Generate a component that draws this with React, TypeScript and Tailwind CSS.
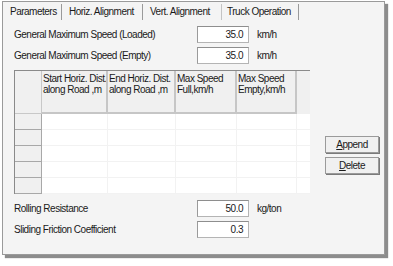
import React from "react";

const font = { fontFamily: '"Liberation Sans", Arial, sans-serif' };

function Field({ label, value, unit, mt }: { label: string; value: string; unit?: string; mt: string }) {
  return (
    <div className={`flex items-center h-[17px] ${mt}`}>
      <div className="w-[194px] pl-[11px] whitespace-nowrap">{label}</div>
      <div className="w-[52px] h-[17px] border border-[#b4b4b4] border-t-[#8e8e8e] border-l-[#9a9a9a] bg-white flex items-center justify-end pr-[5px]">{value}</div>
      {unit ? <div className="ml-[8px]">{unit}</div> : null}
    </div>
  );
}

const cols = [
  { w: "w-[66px]", l1: "Start Horiz. Dist.", l2: "along Road ,m" },
  { w: "w-[68px]", l1: "End Horiz. Dist.", l2: "along Road ,m" },
  { w: "w-[61px]", l1: "Max Speed", l2: "Full,km/h" },
  { w: "w-[60px]", l1: "Max Speed", l2: "Empty,km/h" },
];

export default function App() {
  return (
    <div className="w-[393px] h-[266px] bg-white pl-[2px] pt-[1px] text-[10px] tracking-[-0.5px] leading-[12px] text-[#1a1a1a]" style={font}>
      <div className="w-[383px] h-[254px] border border-[#9a9a9a] bg-[#f4f4f4] shadow-[3px_3px_1px_rgba(0,0,0,0.45)] flex flex-col">
        <div className="flex h-[18px] items-stretch pt-[2px]">
          <div className="w-[59px] pl-[7px] flex items-center border-r border-[#9a9a9a]">Parameters</div>
          <div className="w-[81px] pl-[7px] flex items-center border-r border-[#9a9a9a]">Horiz. Alignment</div>
          <div className="w-[79px] pl-[7px] flex items-center border-r border-[#c4c4c4]">Vert. Alignment</div>
          <div className="w-[77px] pl-[5px] flex items-center border-r border-[#9a9a9a]">Truck Operation</div>
        </div>
        <Field label="General Maximum Speed (Loaded)" value="35.0" unit="km/h" mt="mt-[6px]" />
        <Field label="General Maximum Speed (Empty)" value="35.0" unit="km/h" mt="mt-[4px]" />
        <div className="flex mt-[6px]">
          <div className="ml-[11px] w-[296px] h-[124px] border-t border-l border-[#8a8a8a] bg-[#f0f0f0] flex flex-col">
            <div className="flex h-[43px]">
              <div className="w-[27px] border-r border-b border-[#c8c8c8]" />
              {cols.map((c, i) => (
                <div key={i} className={`${c.w} border-r-2 border-b-2 border-[#c6c6c6] pl-[1px] pt-[2px] leading-[11px] whitespace-nowrap overflow-hidden`}>
                  <div>{c.l1}</div>
                  <div>{c.l2}</div>
                </div>
              ))}
            </div>
            {[0, 1, 2, 3, 4].map((r) => (
              <div key={r} className="flex h-[16px]">
                <div className="w-[27px] border-r border-b border-[#a8a8a8] bg-[#f0f0f0]" />
                <div className="flex-1 bg-white border-b border-[#f2f2f2] flex">
                  <div className="w-[66px] border-r border-[#f2f2f2]" />
                  <div className="w-[68px] border-r border-[#f2f2f2]" />
                  <div className="w-[61px] border-r border-[#f2f2f2]" />
                  <div className="w-[60px] border-r border-[#f2f2f2]" />
                </div>
              </div>
            ))}
          </div>
          <div className="ml-[15px] mt-[66px] flex flex-col gap-[4px]">
            <div className="w-[54px] h-[17px] border border-[#9a9a9a] bg-[#f0f0f0] shadow-[1px_1px_0_#7a7a7a] flex items-center justify-center"><span><u>A</u>ppend</span></div>
            <div className="w-[54px] h-[17px] border border-[#9a9a9a] bg-[#f0f0f0] shadow-[1px_1px_0_#7a7a7a] flex items-center justify-center"><span><u>D</u>elete</span></div>
          </div>
        </div>
        <Field label="Rolling Resistance" value="50.0" unit="kg/ton" mt="mt-[6px]" />
        <Field label="Sliding Friction Coefficient" value="0.3" mt="mt-[4px]" />
      </div>
    </div>
  );
}
